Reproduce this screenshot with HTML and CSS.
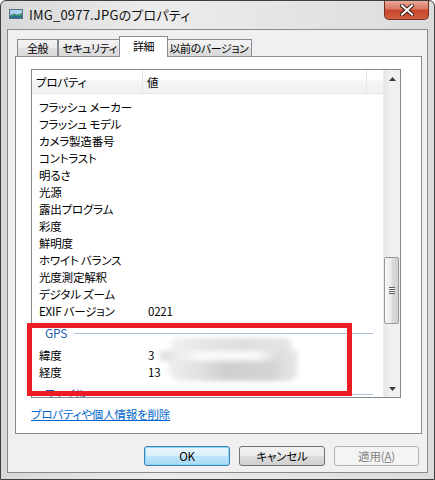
FILE: index.html
```html
<!DOCTYPE html>
<html lang="ja">
<head>
<meta charset="utf-8">
<title>IMG_0977.JPGのプロパティ</title>
<link rel="stylesheet" href="styles.css">
</head>
<body>
<div class="window">
  <div class="titlebar">
    <svg class="app-icon" width="14" height="10" viewBox="0 0 14 10">
      <rect x="0.5" y="0.5" width="13" height="9" fill="#7fb0d8" stroke="#5a6f80"/>
      <rect x="1" y="1" width="12" height="4" fill="#a9d2ef"/>
      <path d="M1 7 L5 4.5 L8 6 L13 4 L13 9 L1 9 Z" fill="#3f8f6a"/>
      <path d="M1 8 L6 6.5 L13 7.5 L13 9 L1 9 Z" fill="#2c6e8f"/>
    </svg>
    <span class="title">IMG_0977.JPGのプロパティ</span>
    <div class="close">
      <svg width="14" height="12" viewBox="0 0 14 12">
        <path d="M2 1.5 L12 10.5 M12 1.5 L2 10.5" stroke="#3a1a14" stroke-width="4" stroke-linecap="square"/>
        <path d="M2 1.5 L12 10.5 M12 1.5 L2 10.5" stroke="#ffffff" stroke-width="2" stroke-linecap="square"/>
      </svg>
    </div>
  </div>

  <div class="client">
    <div class="tabs">
      <div class="tab tab-general">全般</div>
      <div class="tab tab-security">セキュリティ</div>
      <div class="tab tab-details selected">詳細</div>
      <div class="tab tab-previous">以前のバージョン</div>
    </div>

    <div class="panel">
      <div class="listview">
        <div class="lv-main">
          <div class="lv-header">
            <div class="hcol hcol-name">プロパティ</div>
            <div class="hcol hcol-value">値</div>
            <div class="hcol hcol-rest"></div>
          </div>
          <div class="lv-rows">
            <div class="row"><span class="name">フラッシュ メーカー</span><span class="value"></span></div>
            <div class="row"><span class="name">フラッシュ モデル</span><span class="value"></span></div>
            <div class="row"><span class="name">カメラ製造番号</span><span class="value"></span></div>
            <div class="row"><span class="name">コントラスト</span><span class="value"></span></div>
            <div class="row"><span class="name">明るさ</span><span class="value"></span></div>
            <div class="row"><span class="name">光源</span><span class="value"></span></div>
            <div class="row"><span class="name">露出プログラム</span><span class="value"></span></div>
            <div class="row"><span class="name">彩度</span><span class="value"></span></div>
            <div class="row"><span class="name">鮮明度</span><span class="value"></span></div>
            <div class="row"><span class="name">ホワイト バランス</span><span class="value"></span></div>
            <div class="row"><span class="name">光度測定解釈</span><span class="value"></span></div>
            <div class="row"><span class="name">デジタル ズーム</span><span class="value"></span></div>
            <div class="row"><span class="name">EXIF バージョン</span><span class="value">0221</span></div>
            <div class="group"><span class="group-label">GPS</span><span class="group-line"></span></div>
            <div class="row"><span class="name">緯度</span><span class="value">3</span></div>
            <div class="row"><span class="name">経度</span><span class="value">13</span></div>
            <div class="group"><span class="group-label">ファイル</span><span class="group-line"></span></div>
          </div>
          <div class="redact">
            <div class="redact-top"></div>
            <div class="redact-streak"></div>
            <div class="redact-bottom"></div>
          </div>
        </div>
        <div class="scrollbar">
          <div class="sb-btn"><svg width="7" height="4" viewBox="0 0 7 4"><path d="M0 4 L3.5 0 L7 4 Z" fill="#3c3c3c"/></svg></div>
          <div class="sb-track">
            <div class="sb-thumb">
              <div class="grip"></div>
            </div>
          </div>
          <div class="sb-btn"><svg width="7" height="4" viewBox="0 0 7 4"><path d="M0 0 L7 0 L3.5 4 Z" fill="#3c3c3c"/></svg></div>
        </div>
      </div>
      <a class="link" href="#">プロパティや個人情報を削除</a>
    </div>

    <div class="buttons">
      <div class="btn btn-default">OK</div>
      <div class="btn">キャンセル</div>
      <div class="btn btn-disabled">適用(<u>A</u>)</div>
    </div>
  </div>

  <div class="annotation"></div>
</div>
</body>
</html>
```

FILE: styles.css
```css
html, body {
  margin: 0;
  padding: 0;
  background: #ffffff;
}

body {
  font-family: "Noto Sans CJK JP", "Liberation Sans", sans-serif;
  font-size: 11.5px;
  letter-spacing: -0.2px;
  font-feature-settings: "palt";
  color: #000000;
}

.window {
  position: relative;
  width: 435px;
  height: 480px;
  box-sizing: border-box;
  border: 1px solid #3f3f3f;
  border-radius: 6px 6px 0 0;
  background: linear-gradient(to right, #d8d8d8 0%, #ececec 35%, #e6e6e6 60%, #dcdcdc 100%);
  display: flex;
  flex-direction: column;
}

.titlebar {
  height: 28px;
  display: flex;
  align-items: flex-start;
  padding-left: 8px;
}

.app-icon {
  margin-top: 8px;
  flex: none;
}

.title {
  margin-left: 6px;
  margin-top: 5px;
  font-size: 13px;
  line-height: 18px;
  letter-spacing: 0.2px;
  color: #111111;
}

.close {
  margin-left: auto;
  margin-right: 5px;
  width: 45px;
  height: 19px;
  box-sizing: border-box;
  border: 1px solid #6e3026;
  border-top: none;
  border-radius: 0 0 5px 5px;
  background: linear-gradient(#e9aa99 0%, #d97560 45%, #c8452b 50%, #d0603f 100%);
  display: flex;
  align-items: center;
  justify-content: center;
}

.client {
  margin: 0 6px 6px;
  border: 1px solid #8a8a8a;
  background: #f0f0f0;
  flex: 1;
  display: flex;
  flex-direction: column;
  padding-top: 6px;
}

.tabs {
  display: flex;
  align-items: flex-end;
  height: 21px;
  margin-left: 9px;
  margin-bottom: -1px;
  position: relative;
  z-index: 1;
}

.tab {
  box-sizing: border-box;
  height: 17px;
  margin-bottom: 1px;
  border: 1px solid #898c95;
  border-bottom: none;
  background: linear-gradient(#f4f4f4 0%, #ececec 50%, #e0e0e0 51%, #d9d9d9 100%);
  display: flex;
  align-items: center;
  justify-content: center;
  line-height: 14px;
  font-size: 11px;
  letter-spacing: -0.4px;
  white-space: nowrap;
}

.tab-general { width: 41px; }
.tab-security { width: 63px; }
.tab-details { width: 49px; }
.tab-previous { width: 86px; }

.tab.selected {
  height: 21px;
  margin: 0 -2px;
  background: #ffffff;
  padding-bottom: 2px;
  position: relative;
  z-index: 2;
}

.panel {
  margin: 0 5px 0 7px;
  height: 378px;
  box-sizing: border-box;
  border: 1px solid #898c95;
  background: #ffffff;
  padding: 12px 0 0 15px;
}

.listview {
  width: 370px;
  height: 329px;
  box-sizing: border-box;
  border: 1px solid #828790;
  display: flex;
  overflow: hidden;
}

.lv-main {
  position: relative;
  flex: 1;
  overflow: hidden;
}

.lv-header {
  display: flex;
  height: 24px;
  box-sizing: border-box;
  border-bottom: 1px solid #e3e5e8;
  background: linear-gradient(#ffffff 0%, #ffffff 45%, #f3f4f6 46%, #f1f2f4 100%);
}

.hcol {
  box-sizing: border-box;
  display: flex;
  align-items: center;
  line-height: 14px;
  border-right: 1px solid #e3e5e8;
}

.hcol-name { width: 111px; padding-left: 4px; }
.hcol-value { width: 224px; padding-left: 4px; }
.hcol-rest { flex: 1; border-right: none; }

.lv-rows {
  padding-top: 4px;
}

.row {
  display: flex;
  height: 17px;
  align-items: center;
  line-height: 14px;
  white-space: nowrap;
}

.name {
  width: 116px;
  box-sizing: border-box;
  padding-left: 7px;
}

.value {
  flex: 1;
}

.group {
  display: flex;
  align-items: center;
  height: 27px;
  padding-left: 13px;
  padding-right: 10px;
}

.group-label {
  color: #1e5fb4;
  line-height: 14px;
  font-size: 12px;
}

.group-line {
  flex: 1;
  height: 1px;
  margin-left: 7px;
  margin-top: 1px;
  background: #a9c0de;
}

.redact {
  position: absolute;
  left: 128px;
  top: 268px;
  width: 138px;
  height: 46px;
  filter: blur(2.5px);
}

.redact-top {
  height: 13px;
  margin: 0 6px 0 10px;
  background: linear-gradient(to right, #f2f2f2 0%, #e4e4e4 30%, #dedede 60%, #e6e6e6 100%);
  border-radius: 6px 6px 0 0;
}

.redact-streak {
  height: 10px;
  background: linear-gradient(to right, #dddddd 0%, #eeeeee 15%, #fafafa 30%, #fafafa 70%, #dcdcdc 85%, #e8e8e8 100%);
}

.redact-bottom {
  height: 20px;
  margin: 0 0 0 8px;
  background: linear-gradient(to right, #efefef 0%, #e0e0e0 25%, #cfcfcf 45%, #d3d3d3 80%, #eaeaea 100%);
  border-radius: 0 0 10px 14px;
}

.scrollbar {
  width: 17px;
  display: flex;
  flex-direction: column;
  background: linear-gradient(to right, #e6e6e6, #f1f1f1 40%, #efefef);
  border-left: 1px solid #ececec;
  box-sizing: border-box;
}

.sb-btn {
  height: 17px;
  display: flex;
  align-items: center;
  justify-content: center;
}

.sb-track {
  flex: 1;
  padding-top: 170px;
}

.sb-thumb {
  margin: 0 1px 0 0;
  height: 67px;
  box-sizing: border-box;
  border: 1px solid #989898;
  border-radius: 2px;
  background: linear-gradient(to right, #f7f7f7 0%, #ececec 45%, #dadada 55%, #d2d2d2 100%);
  display: flex;
  align-items: center;
  justify-content: center;
}

.grip {
  width: 6px;
  height: 7px;
  background: repeating-linear-gradient(#5e5e5e 0px, #5e5e5e 1px, #f4f4f4 1px, #f4f4f4 2px);
}

.link {
  display: block;
  margin-top: 8px;
  width: max-content;
  color: #0066cc;
  text-decoration: underline;
  line-height: 16px;
}

.buttons {
  display: flex;
  justify-content: flex-end;
  gap: 9px;
  margin-top: 12px;
  padding-right: 8px;
}

.btn {
  width: 86px;
  height: 20px;
  box-sizing: border-box;
  border: 1px solid #707070;
  border-radius: 3px;
  background: linear-gradient(#f2f2f2 0%, #ebebeb 50%, #dddddd 51%, #cfcfcf 100%);
  display: flex;
  align-items: center;
  justify-content: center;
  line-height: 14px;
}

.btn-default {
  border-color: #3c7fb1;
  background: linear-gradient(#eaf6fd 0%, #d9f0fc 50%, #bee6fd 51%, #a7d9f5 100%);
  box-shadow: inset 0 0 0 1px #8fd8ff;
}

.btn-disabled {
  width: 85px;
  border-color: #adb2b5;
  background: #f4f4f4;
  color: #838383;
}

.annotation {
  position: absolute;
  left: 26px;
  top: 322px;
  width: 325px;
  height: 73px;
  box-sizing: border-box;
  border: 5px solid #ed1c24;
  pointer-events: none;
}
```
